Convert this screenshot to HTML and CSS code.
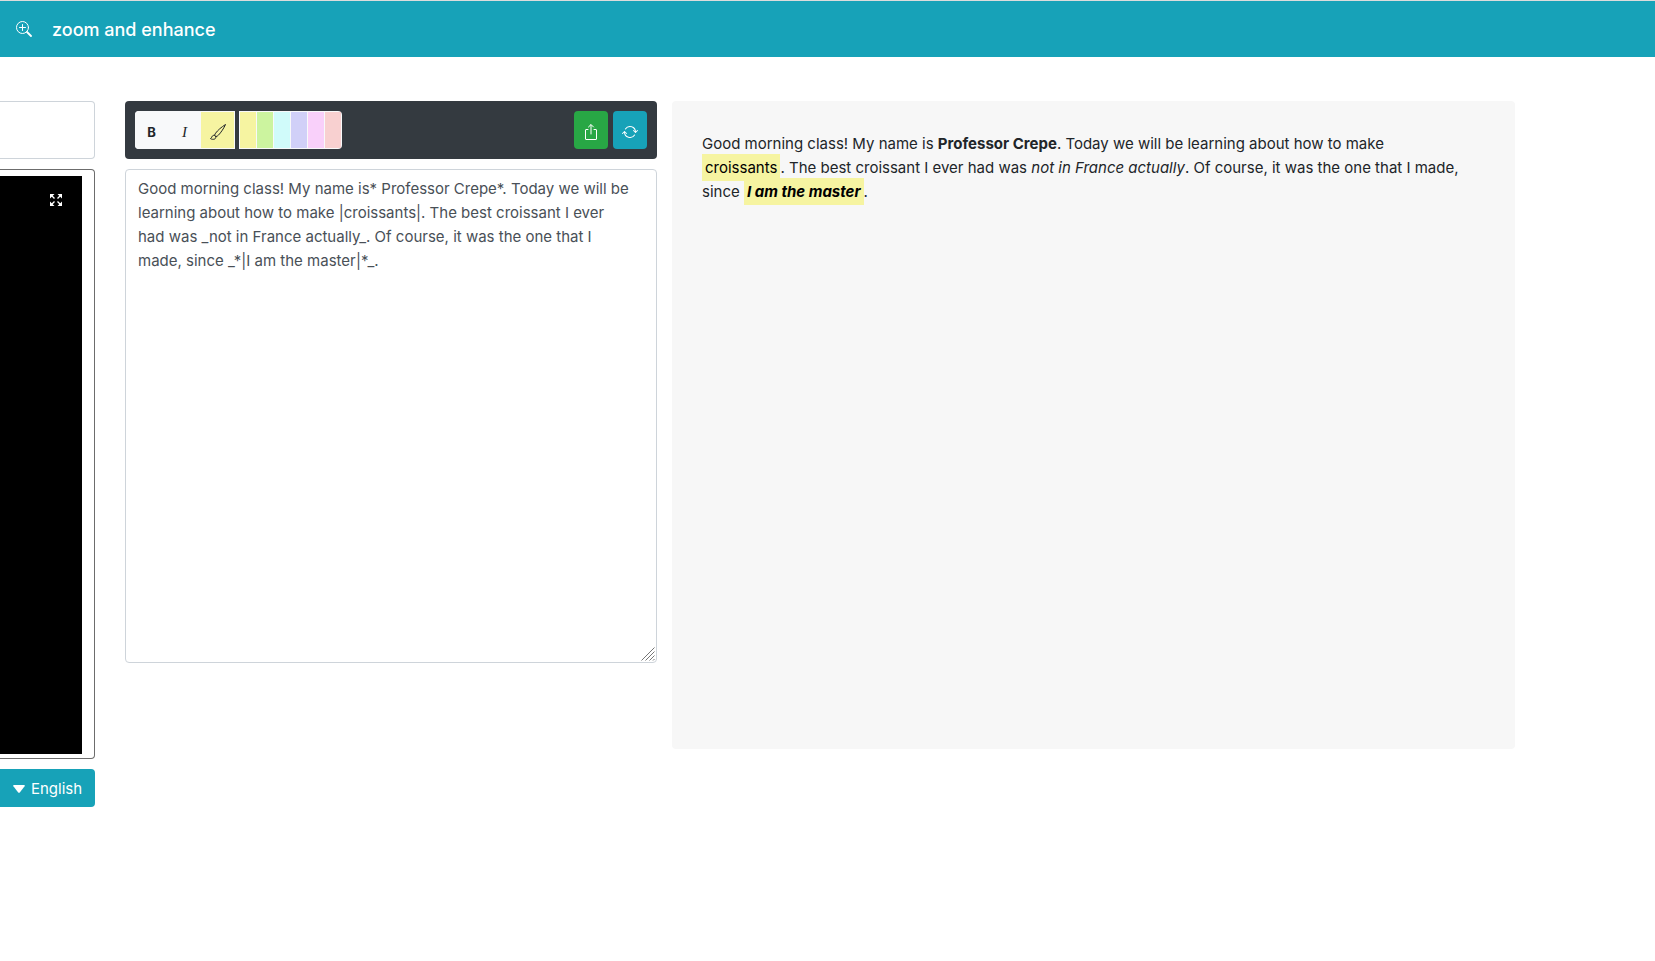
FILE: index.html
```
<!DOCTYPE html>
<html lang="en">
<head>
  <meta charset="UTF-8" />
  <meta name="viewport" content="width=device-width, initial-scale=1.0"/>
  <title>zoom and enhance</title>
  <link rel="stylesheet" href="styles.css">
</head>
<body>

  <header class="navbar">
    <svg class="icon" viewBox="0 0 16 16" fill="none" stroke="currentColor" stroke-linecap="round" aria-hidden="true">
      <circle cx="6.5" cy="6.5" r="6"/>
      <path d="M6.5 3.5v6M3.5 6.5h6"/>
      <path d="M11 11l4 4" stroke-width="1.8"/>
    </svg>
    <a class="brand" href="#">zoom and enhance</a>
  </header>

  <main class="workspace">
    <!-- Video -->
    <section class="video-col">
      <div class="source-box"></div>
      <div class="video-frame">
        <div class="video">
          <button class="fullscreen" type="button" aria-label="Fullscreen">
            <svg viewBox="0 0 12 12" fill="currentColor" stroke="currentColor" stroke-width="1.4" aria-hidden="true">
              <path d="M0 0h4.500L0 4.500zM12 0v4.500L7.500 0zM0 12V7.500L4.500 12zM12 12H7.500L12 7.500z" stroke="none"/>
              <path d="M1 1l3.500 3.500M11 1L7.500 4.500M1 11l3.500-3.500M11 11L7.500 7.500"/>
            </svg>
          </button>
        </div>
      </div>
      <button class="btn language" type="button">
        <svg class="caret" viewBox="0 0 12 8" fill="currentColor" aria-hidden="true"><path d="M1 0h10q1.500 0 .6 1.200L7 7.200q-1 1-2 0L.4 1.200Q-.5 0 1 0z"/></svg>
        English
      </button>
    </section>

    <!-- Editor -->
    <section class="editor-col">
      <div class="toolbar">
        <div class="tools">
          <button class="tool bold" type="button" aria-label="Bold">B</button>
          <button class="tool italic" type="button" aria-label="Italic">I</button>
          <button class="tool highlight yellow" type="button" aria-label="Highlight">
            <svg class="icon" viewBox="0 0 16 16" fill="none" stroke="currentColor" stroke-linejoin="round" aria-hidden="true">
              <path d="M15.500.5C11.500 3 7.500 6.500 5.600 9.200c-.5.700-.8 1.400-1 2.200l1.300 1.200c1-.2 1.800-.7 2.500-1.400C11 8.500 14 4 15.500.5z"/>
              <path d="M4.600 11.400c-1.200-.3-2.100.2-2.600 1.200-.4.800-.7 1.500-1.500 2 1.400.9 3 .9 4.200.4.900-.5 1.200-1.300 1.200-2.400z"/>
            </svg>
          </button>
        </div>
        <div class="swatches">
          <button class="swatch yellow" type="button" aria-label="Yellow"></button>
          <button class="swatch green" type="button" aria-label="Green"></button>
          <button class="swatch cyan" type="button" aria-label="Cyan"></button>
          <button class="swatch violet" type="button" aria-label="Violet"></button>
          <button class="swatch pink" type="button" aria-label="Pink"></button>
          <button class="swatch red" type="button" aria-label="Red"></button>
        </div>
        <div class="actions">
          <button class="btn share" type="button" aria-label="Share">
            <svg class="icon" viewBox="0 0 16 16" fill="none" stroke="currentColor" stroke-linecap="round" stroke-linejoin="round" aria-hidden="true">
              <path d="M5 5.500H3a.5.5 0 0 0-.5.5v9a.5.5 0 0 0 .5.500h10a.5.5 0 0 0 .5-.500V6a.5.5 0 0 0-.5-.500h-2"/>
              <path d="M8 10V1M5.500 3L8 .5 10.500 3"/>
            </svg>
          </button>
          <button class="btn refresh" type="button" aria-label="Refresh">
            <svg class="icon" viewBox="0 0 16 16" fill="currentColor" aria-hidden="true">
              <path d="M2.854 7.146a.5.5 0 0 0-.708 0l-2 2a.5.5 0 1 0 .708.708L2.500 8.207l1.646 1.647a.5.5 0 0 0 .708-.708l-2-2zm13-1a.5.5 0 0 0-.708 0L13.500 7.793l-1.646-1.647a.5.5 0 0 0-.708.708l2 2a.5.5 0 0 0 .708 0l2-2a.5.5 0 0 0 0-.708z"/>
              <path d="M8 3a4.995 4.995 0 0 0-4.192 2.273.5.5 0 0 1-.837-.546A6 6 0 0 1 14 8a.5.5 0 0 1-1.001 0 5 5 0 0 0-5-5zM2.500 7.500A.5.5 0 0 1 3 8a5 5 0 0 0 9.192 2.727.5.5 0 1 1 .837.546A6 6 0 0 1 2 8a.5.5 0 0 1 .501-.5z"/>
            </svg>
          </button>
        </div>
      </div>
      <div class="input-wrap">
        <textarea class="notes" aria-label="Notes" spellcheck="false">Good morning class! My name is* Professor Crepe*. Today we will be
learning about how to make |croissants|. The best croissant I ever
had was _not in France actually_. Of course, it was the one that I
made, since _*|I am the master|*_.</textarea>
        <svg class="grip" viewBox="0 0 14 14" fill="none" stroke="#777" aria-hidden="true">
          <path d="M.5 13.500l13-13M4.500 13.500l9-9M8.500 13.500l5-5M12 13.500l1.500-1.500"/>
        </svg>
      </div>
    </section>

    <!-- Preview -->
    <section class="preview">
      <p>
        Good morning class! My name is <b>Professor Crepe</b>. Today we will be learning about how to make<br>
        <mark>croissants</mark>. The best croissant I ever had was <i>not in France actually</i>. Of course, it was the one that I made,<br>
        since <i><b><mark>I am the master</mark></b></i>.
      </p>
    </section>
  </main>

</body>
</html>
```
FILE: styles.css
```
/* Reset & Base */
* { margin:0; padding:0; box-sizing:border-box; }
body {
  font-family:Inter,"Liberation Sans",sans-serif;
  font-size:15px;
  line-height:24px;
  color:#212529;
  background:#fff;
}
button, textarea { font:inherit; }
button { border:none; cursor:pointer; }
.icon { display:block; width:16px; height:16px; }

/* Navbar */
.navbar {
  display:flex; align-items:center; gap:20px;
  height:57px;
  padding:0 16px;
  color:#fff;
  background:#17a2b8;
  border-top:1px solid #dcdcdc;
}
.brand {
  padding-top:2px;
  font-size:18px; font-weight:500;
  color:#fff; text-decoration:none;
}

/* Columns */
.workspace {
  display:grid; align-items:start; column-gap:15px;
  grid-template-columns:110px minmax(0,532fr) minmax(0,843fr);
  padding:44px 140px 44px 0;
}
.video-col { padding-right:15px; }

/* Buttons */
.btn {
  display:flex; align-items:center; justify-content:center;
  height:38px;
  color:#fff;
  background:#17a2b8;
  border-radius:4px;
}

/* Video */
.source-box {
  height:58px;
  margin-bottom:10px;
  border:1px solid #ced4da; border-left:none;
  border-radius:0 4px 4px 0;
}
.video-frame {
  padding:6px 12px 4px 0;
  margin-bottom:10px;
  border:1px solid #6c6c6c; border-left:none;
  border-radius:0 4px 4px 0;
}
.video {
  display:flex; justify-content:flex-end;
  height:578px;
  padding:18px 20px;
  background:#000;
}
.fullscreen {
  width:12px; height:12px;
  color:#fff; background:none;
}
.fullscreen svg { display:block; }
.language {
  width:100%; gap:6px;
  padding-top:2px;
  border-radius:0 4px 4px 0;
}
.caret { width:12px; height:8px; }

/* Toolbar */
.toolbar {
  display:flex; gap:4px;
  padding:10px;
  margin-bottom:10px;
  background:#343a40;
  border-radius:4px;
}
.tools, .swatches {
  display:flex;
  height:38px;
  overflow:hidden;
  background:#f8f9fa;
}
.tools { border-radius:4px 0 0 4px; }
.swatches {
  gap:1px; padding:1px;
  border-radius:0 4px 4px 0;
}
.tool {
  display:flex; align-items:center; justify-content:center;
  width:33px;
  padding-top:4px;
  color:#212529;
  background:#f8f9fa;
}
.bold { font-size:13px; font-weight:700; }
.italic { font-family:"Liberation Serif",serif; font-size:15px; font-style:italic; }
.highlight {
  width:34px;
  border:1px solid #f8f9fa; border-left:none;
}
.swatch { width:16px; }
.yellow { background:#f6f4a1; }
.green { background:#ccf49f; }
.cyan { background:#d0fbfa; }
.violet { background:#d1d0f8; }
.pink { background:#f9d0fa; }
.red { background:#f8d0d0; }
.actions { display:flex; gap:5px; margin-left:auto; }
.actions .btn { width:34px; padding-top:4px; }
.share { background:#28a745; }

/* Text box */
.input-wrap { position:relative; }
.notes {
  display:block;
  width:100%; height:494px;
  padding:7px 12px;
  color:#495057;
  background:#fff;
  border:1px solid #ced4da;
  border-radius:4px;
  outline:none;
  resize:vertical;
}
.notes::-webkit-resizer { background:transparent; }
.grip {
  position:absolute; right:2px; bottom:2px;
  width:14px; height:14px;
  pointer-events:none;
}

/* Preview */
.preview {
  min-height:648px;
  padding:31px 30px;
  background:#f7f7f7;
  border-radius:4px;
}
mark {
  padding:4px 3px;
  color:#000;
  background:#f6f4a1;
}
```
